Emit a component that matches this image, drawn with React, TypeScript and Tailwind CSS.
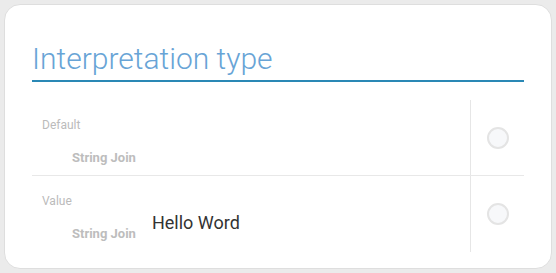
export default function App() {
  const rows = [
    { label: "Default", value: null as string | null },
    { label: "Value", value: "Hello Word" },
  ];
  return (
    <div className="w-[556px] h-[273px] bg-[#ebebeb] p-[4px] font-['Roboto',sans-serif]">
      <div className="h-[265px] w-[548px] rounded-[16px] border border-[#dedede] bg-white px-[27px] pt-[35px]">
        <div className="border-b-2 border-[#2a88b5] pb-[3px]">
          <h1 className="text-[30px] font-light leading-[37px] text-[#68a4d6]">
            Interpretation type
          </h1>
        </div>
        <div className="mt-[18px]">
          {rows.map((row, i) => (
            <div
              key={row.label}
              className={
                "flex h-[76px] " +
                (i === 0 ? "border-b border-[#e8e8e8]" : "")
              }
            >
              <div className="flex-1 pl-[10px] pt-[18px]">
                <div className="text-[12px] leading-[14px] text-[#bbbbbb]">
                  {row.label}
                </div>
                <div className="mt-[18px] flex items-center">
                  <span className="ml-[30px] text-[13px] font-bold leading-[15px] text-[#bdbdbd]">
                    String Join
                  </span>
                  {row.value && (
                    <span className="ml-[16px] -mt-[22px] text-[18px] leading-[21px] text-[#333]">
                      {row.value}
                    </span>
                  )}
                </div>
              </div>
              <div className="flex w-[54px] items-center justify-center border-l border-[#e6e6e6]">
                <div className="h-[22px] w-[22px] rounded-full border-2 border-[#e4e4e4] bg-[#f7f8fa]" />
              </div>
            </div>
          ))}
        </div>
      </div>
    </div>
  );
}
